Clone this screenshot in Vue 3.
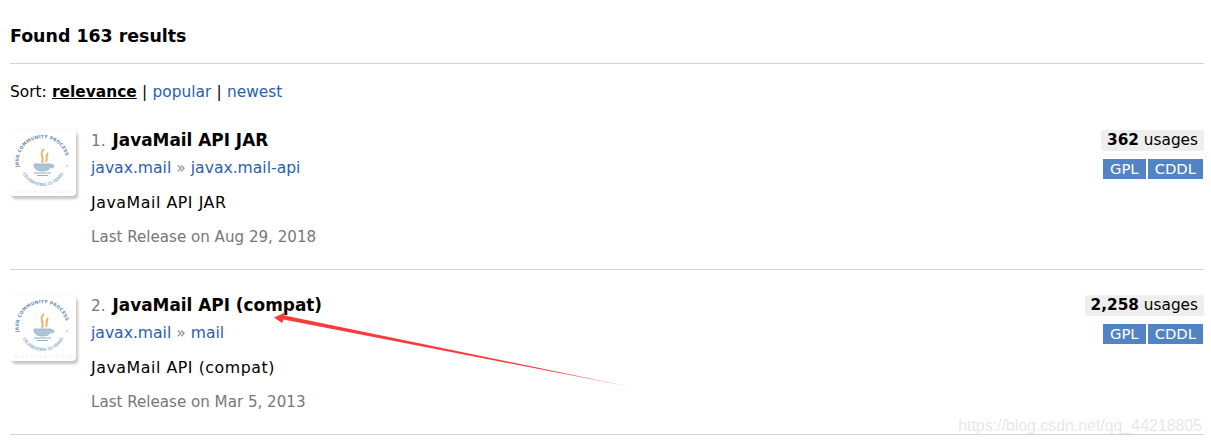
<script setup>
const results = [
  { n: 1, title: 'JavaMail API JAR', group: 'javax.mail', artifact: 'javax.mail-api', desc: 'JavaMail API JAR', date: 'Aug 29, 2018', usages: '362' },
  { n: 2, title: 'JavaMail API (compat)', group: 'javax.mail', artifact: 'mail', desc: 'JavaMail API (compat)', date: 'Mar 5, 2013', usages: '2,258' }
]
</script>

<template>
  <div class="page">
    <h2 class="found">Found 163 results</h2>
    <div class="sort">
      Sort: <b class="current">relevance</b> | <a>popular</a> | <a>newest</a>
    </div>

    <div v-for="r in results" :key="r.n" class="item">
      <div class="logo">
        <svg width="66" height="66" viewBox="0 0 66 66">
          <defs>
            <path :id="'top' + r.n" d="M9 37a24 24 0 1 1 47 0" />
            <path :id="'bot' + r.n" d="M10 33a23 23 0 0 0 46 0" />
          </defs>
          <text font-size="4.600" font-weight="700" fill="#4f7ca0" font-family="DejaVu Sans, sans-serif">
            <textPath :href="'#top' + r.n" textLength="74">JAVA COMMUNITY PROCESS</textPath>
          </text>
          <text font-size="4.200" font-weight="700" fill="#8fb0c8" font-family="DejaVu Sans, sans-serif">
            <textPath :href="'#bot' + r.n" startOffset="11" textLength="50">CELEBRATING 15 YEARS</textPath>
          </text>
          <path d="M34 19c-6 5 1 8-2 14M38 23c-3 3 0 6-2 9" fill="none" stroke="#eda64c" stroke-width="2" />
          <path d="M24 34h17c0 5-3 7-8.500 7S24 39 24 34zM41 35c4-1 4 3 0 3" fill="#9dbbd0" stroke="#7fa3be" stroke-width=".8" />
          <path d="M24 43h17M27 45.500h11" stroke="#7fa3be" stroke-width="1.200" />
          <circle cx="8" cy="36" r=".9" fill="#eebb77" />
          <circle cx="57" cy="36" r=".9" fill="#eebb77" />
          <text x="33" y="62.500" text-anchor="middle" font-size="5" fill="#e6e6e6" font-family="DejaVu Sans, sans-serif" textLength="58">mvnrepository</text>
        </svg>
      </div>
      <div class="info">
        <div class="title"><span class="num">{{ r.n }}.</span> <b>{{ r.title }}</b></div>
        <div class="coords"><a>{{ r.group }}</a> <span class="sep">»</span> <a>{{ r.artifact }}</a></div>
        <div class="desc">{{ r.desc }}</div>
        <div class="release">Last Release on {{ r.date }}</div>
      </div>
      <div class="side">
        <div class="usages"><b>{{ r.usages }}</b> usages</div>
        <div class="licenses"><span>GPL</span><span>CDDL</span></div>
      </div>
    </div>

    <svg class="arrow" width="380" height="90" viewBox="260 305 380 90">
      <defs>
        <linearGradient id="fade" gradientUnits="userSpaceOnUse" x1="274" y1="316" x2="635" y2="388">
          <stop offset="0" stop-color="#fb3b3b" />
          <stop offset=".75" stop-color="#fb3b3b" />
          <stop offset="1" stop-color="#fb3b3b" stop-opacity=".45" />
        </linearGradient>
      </defs>
      <path d="M274 317.500L285 312.500L284.500 315.500L635 387.700L283.500 319.500L282 323z" fill="url(#fade)" />
    </svg>
    <div class="mark">https://blog.csdn.net/qq_44218805</div>
  </div>
</template>

<style scoped>
.page { position: relative; width: 1194px; height: 444px; box-sizing: border-box; margin-left: 10px; padding-top: 26px; font-family: "DejaVu Sans", Verdana, sans-serif; font-size: 15.300px; color: #000; overflow: hidden; }
.found { margin: 0; font-size: 17.400px; line-height: 20px; font-weight: 700; padding-bottom: 17px; border-bottom: 1px solid #d3d3d3; }
.sort { margin-top: 18px; line-height: 20px; margin-bottom: 3px; font-size: 15.400px; word-spacing: .4px; }
.current { text-decoration: underline; }
a { color: #2a5fb0; }
.item { display: flex; height: 165px; box-sizing: border-box; padding-top: 25px; border-bottom: 1px solid #d3d3d3; }
.logo { width: 66px; height: 66px; background: #fff; border-radius: 4px; box-shadow: 2px 3px 3px #c4c4c4, 0 0 2px #e8e8e8; flex-shrink: 0; margin-right: 15px; }
.logo svg { display: block; opacity: .85; }
.info { flex: 1; }
.title { line-height: 20px; height: 20px; }
.title b { font-size: 16.900px; margin-left: 2px; }
.num { color: #777; }
.coords { margin-top: 8px; line-height: 20px; font-size: 15.600px; }
.sep { color: #888; }
.desc { margin-top: 15px; line-height: 20px; font-size: 15.800px; letter-spacing: .55px; }
.release { margin-top: 14px; line-height: 20px; color: #777; font-size: 15.100px; }
.side { display: flex; flex-direction: column; align-items: flex-end; }
.usages { background: #eee; border-radius: 3px; padding: 0 6px; line-height: 21px; height: 21px; }
.licenses { display: flex; gap: 2px; margin-top: 8px; margin-right: 1px; }
.licenses span { background: #5283c4; color: #fff; height: 20px; line-height: 20px; padding: 0 7px; font-size: 14.800px; }
.arrow { position: absolute; left: 250px; top: 305px; }
.mark { position: absolute; right: 2px; top: 417px; font-family: "Liberation Sans", Arial, sans-serif; font-size: 15.900px; color: rgba(170,170,170,.3); }
</style>
